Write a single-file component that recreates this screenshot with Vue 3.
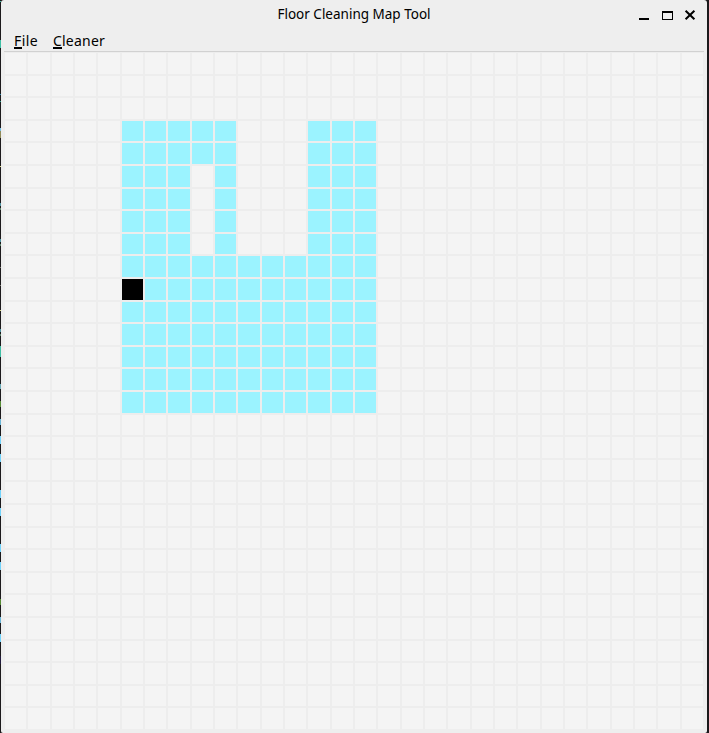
<script setup>
const COLS = 30
const ROWS = 30
const GAP = 2

// Splits a length into whole-pixel tracks, sharing out the remainder evenly.
const tracks = (count, length) =>
  Array.from({ length: count }, (_, i) => {
    const start = Math.round((i * length) / count)
    const end = Math.round(((i + 1) * length) / count)
    return `${end - start - GAP}px`
  }).join(' ')

const gridStyle = {
  gridTemplateColumns: tracks(COLS, 700),
  gridTemplateRows: tracks(ROWS, 678),
}

const cleaner = { row: 10, col: 5 }

const isFloor = (row, col) => {
  if (row < 3 || row > 15 || col < 5 || col > 15) return false
  if (row < 9 && col >= 10 && col <= 12) return false
  return !(row >= 5 && row <= 8 && col === 8)
}

const cells = Array.from({ length: ROWS * COLS }, (_, i) => {
  const row = Math.floor(i / COLS)
  const col = i % COLS
  const robot = row === cleaner.row && col === cleaner.col
  return { id: i, kind: robot ? 'robot' : isFloor(row, col) ? 'floor' : 'empty' }
})

// Slivers of the window behind: [top, height, colour]
const slivers = [
  [1, 1, '#3fbfa5'], [40, 8, '#3fbfa5'], [94, 1, '#2c7fa5'], [101, 1, '#2f9c8b'],
  [128, 3, '#75bfe5'], [131, 7, '#918b5a'], [166, 1, '#d8d785'],
  [203, 3, '#4f91a0'], [208, 2, '#5c8269'], [239, 3, '#4f91a0'], [244, 2, '#5c8269'],
  [267, 1, '#777770'], [285, 1, '#777770'], [310, 1, '#d8d785'],
  [329, 3, '#4f91a0'], [334, 2, '#5c8269'], [346, 11, '#3fbfa5'],
  [384, 5, '#69a9b6'], [401, 6, '#568b35'], [419, 6, '#6ab6d8'],
  [436, 8, '#72d3fb'], [454, 8, '#72d3fb'], [490, 8, '#72d3fb'], [508, 8, '#72d3fb'],
  [544, 8, '#72d3fb'], [562, 8, '#72d3fb'], [599, 6, '#568b35'],
  [617, 6, '#6ab6d8'], [634, 8, '#72d3fb'], [656, 8, '#201a3c'],
]
</script>

<template>
  <div class="desktop">
    <svg class="behind" width="1" height="733" shape-rendering="crispEdges">
      <rect v-for="[y, h, fill] in slivers" :key="y" x="0" :y="y" width="1" :height="h" :fill="fill" />
    </svg>
    <main class="window">
      <header class="titlebar">
        <h1 class="title">Floor Cleaning Map Tool</h1>
        <svg class="controls" width="60" height="14" viewBox="0 0 60 14">
          <path d="M0 10h10v2H0z" />
          <path d="M23 3h11v9H23z M24 5v6h9V5z" fill-rule="evenodd" />
          <path d="M46.6 2.7l8.8 8.6M55.4 2.7l-8.8 8.6" fill="none" stroke="#000" stroke-width="2" />
        </svg>
      </header>
      <nav class="menubar">
        <span class="menu file"><span class="key">F</span>ile</span>
        <span class="menu clean"><span class="key">C</span>leaner</span>
      </nav>
      <section class="map" :style="gridStyle">
        <div v-for="cell in cells" :key="cell.id" :class="cell.kind"></div>
      </section>
    </main>
  </div>
</template>

<style>
body {
  margin: 0;
  overflow: hidden;
}
</style>

<style scoped>
.desktop {
  display: flex;
  width: 709px;
  height: 733px;
  background: #1b191b;
  font-family: "Noto Sans", "Open Sans", sans-serif;
  color: #000;
}
.behind {
  display: block;
  flex: none;
}
.window {
  width: 706px;
  height: 733px;
  box-sizing: border-box;
  padding: 0 3px;
  background: #eee;
  border-radius: 3px 3px 2px 2px;
}
.titlebar {
  display: grid;
  grid-template-columns: 1fr auto 1fr;
  height: 29px;
}
.title {
  grid-column: 2;
  margin: 0;
  font-size: 13.5px;
  font-weight: 400;
  line-height: 28px;
  letter-spacing: 0;
  white-space: nowrap;
}
.controls {
  grid-column: 3;
  justify-self: end;
  margin: 8px 5px 0 0;
}
.menubar {
  display: flex;
  gap: 15px;
  height: 22px;
  padding-left: 10px;
  border-bottom: 1px solid #d1d1d1;
  font-size: 14px;
  line-height: 24px;
}
.menu {
  white-space: nowrap;
}
.file {
  letter-spacing: 0.4px;
}
.clean {
  letter-spacing: 0.2px;
}
.key {
  display: inline-block;
  height: 18px;
  border-bottom: 2px solid #000;
  box-sizing: content-box;
  line-height: 24px;
}
.map {
  display: grid;
  gap: 2px;
  padding: 1px 0 0 1px;
  background: #ededed;
}
.empty {
  background: #f4f4f4;
}
.floor {
  background: #9bf3ff;
}
.robot {
  background: #000;
}
</style>
